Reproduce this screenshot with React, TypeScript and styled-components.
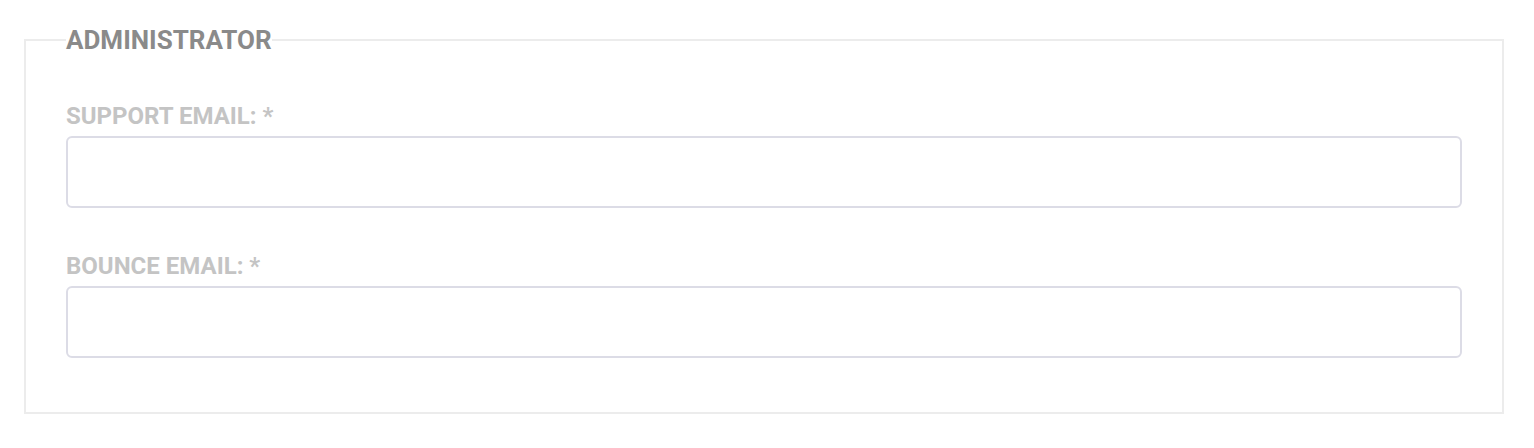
import React from 'react'
import styled, { createGlobalStyle } from 'styled-components'

const GlobalStyle = createGlobalStyle`
  body {
    margin: 0;
    background: #fff;
    font-family: Roboto, "Liberation Sans", sans-serif;
  }
`

const Page = styled.div`
  padding: 24px 30px 0 24px;
`

const Fieldset = styled.fieldset`
  margin: 0;
  border: 2px solid #ececec;
  padding: 46px 40px 54px;
  min-width: 0;
`

const Legend = styled.legend`
  padding: 0;
  font-size: 26px;
  font-weight: 700;
  color: #8a8a8a;
  line-height: 32px;
`

const Field = styled.div`
  display: flex;
  flex-direction: column;
  gap: 6px;

  & + & {
    margin-top: 44px;
  }
`

const Label = styled.label`
  font-size: 24px;
  font-weight: 700;
  color: #c4c4c4;
  line-height: 28px;
`

const Input = styled.input`
  height: 72px;
  box-sizing: border-box;
  border: 2px solid #dcdce6;
  border-radius: 6px;
  padding: 0 16px;
  font-size: 18px;
  font-family: inherit;
  outline: none;
  background: #fff;
`

const fields = [
  { id: 'support', label: 'SUPPORT EMAIL: *' },
  { id: 'bounce', label: 'BOUNCE EMAIL: *' },
]

export default function App() {
  return (
    <>
      <GlobalStyle />
      <Page>
        <Fieldset>
          <Legend>ADMINISTRATOR</Legend>
          {fields.map((f) => (
            <Field key={f.id}>
              <Label htmlFor={f.id}>{f.label}</Label>
              <Input id={f.id} type="email" />
            </Field>
          ))}
        </Fieldset>
      </Page>
    </>
  )
}
